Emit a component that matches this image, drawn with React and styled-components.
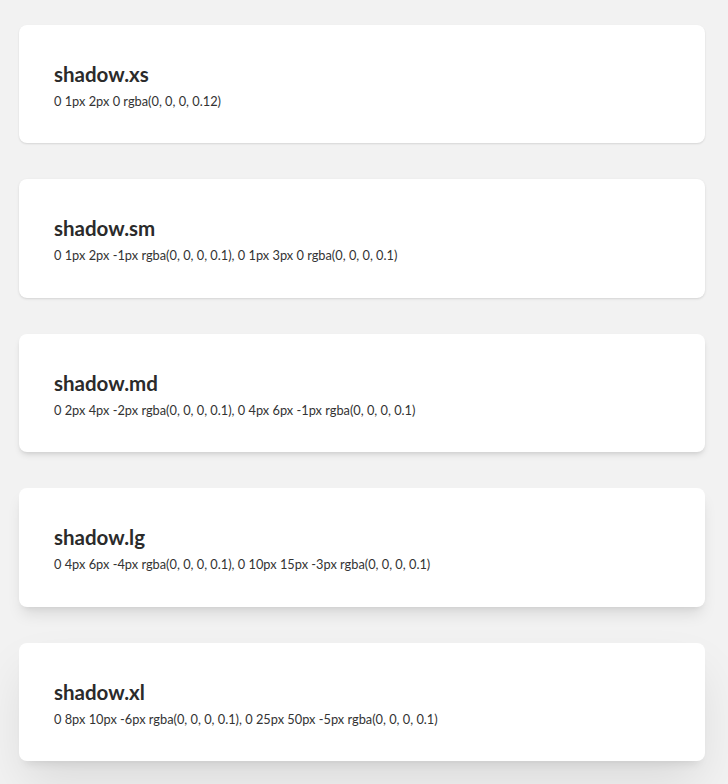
import React from 'react';
import styled, { createGlobalStyle } from 'styled-components';

const shadows = [
  { name: 'xs', value: '0 1px 2px 0 rgba(0, 0, 0, 0.12)' },
  { name: 'sm', value: '0 1px 2px -1px rgba(0, 0, 0, 0.1), 0 1px 3px 0 rgba(0, 0, 0, 0.1)' },
  { name: 'md', value: '0 2px 4px -2px rgba(0, 0, 0, 0.1), 0 4px 6px -1px rgba(0, 0, 0, 0.1)' },
  { name: 'lg', value: '0 4px 6px -4px rgba(0, 0, 0, 0.1), 0 10px 15px -3px rgba(0, 0, 0, 0.1)' },
  { name: 'xl', value: '0 8px 10px -6px rgba(0, 0, 0, 0.1), 0 25px 50px -5px rgba(0, 0, 0, 0.1)' },
];

const GlobalStyle = createGlobalStyle`
  body {
    margin: 0;
    background: #f2f2f2;
    font-family: Lato, "Open Sans", sans-serif;
    color: #333;
  }
`;

const Page = styled.div`
  display: flex;
  flex-direction: column;
  gap: 36px;
  padding: 24.5px 23px 25px 19px;
`;

const Card = styled.div`
  background: #fff;
  border-radius: 8px;
  padding: 36px 35px 33.5px;
  box-shadow: ${(p) => p.$shadow};
`;

const Title = styled.div`
  font-size: 20.5px;
  font-weight: 700;
  line-height: 26px;
  color: #2b2b2b;
`;

const Value = styled.div`
  margin-top: 5px;
  font-size: 12.8px;
  line-height: 18px;
  color: #333;
`;

export default function App() {
  return (
    <>
      <GlobalStyle />
      <Page>
        {shadows.map((s) => (
          <Card key={s.name} $shadow={s.value}>
            <Title>shadow.{s.name}</Title>
            <Value>{s.value}</Value>
          </Card>
        ))}
      </Page>
    </>
  );
}
